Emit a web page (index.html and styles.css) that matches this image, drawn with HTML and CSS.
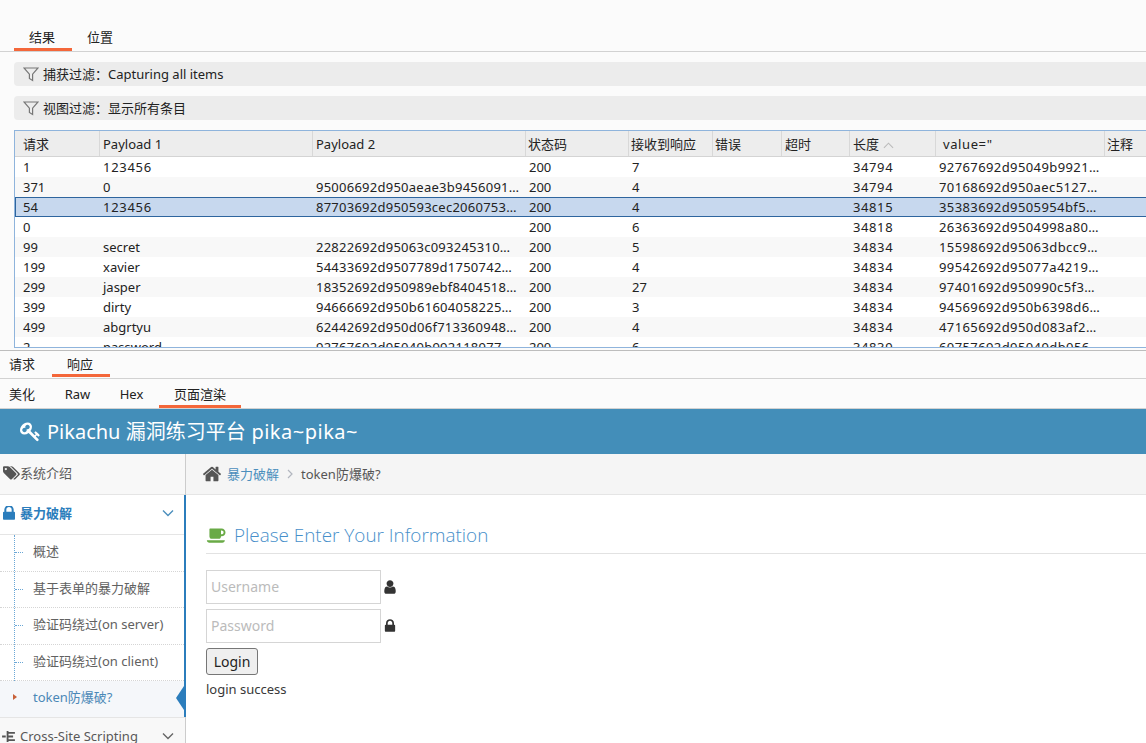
FILE: index.html
```html
<!DOCTYPE html>
<html lang="zh-CN">
<head>
<meta charset="utf-8">
<title>Intruder results</title>
<link rel="stylesheet" href="styles.css">
</head>
<body>
<div class="tabs top-tabs">
  <span class="tab tab-results active">结果</span>
  <span class="tab tab-pos">位置</span>
</div>
<div class="filter filter-first"><svg class="funnel" viewBox="0 0 16 16"><path d="M1 2h14L9.6 8.2V14.5L6.4 12.5V8.2z"/></svg><span>捕获过滤：Capturing all items</span></div>
<div class="filter filter-second"><svg class="funnel" viewBox="0 0 16 16"><path d="M1 2h14L9.6 8.2V14.5L6.4 12.5V8.2z"/></svg><span>视图过滤：显示所有条目</span></div>

<div class="table">
  <div class="row head">
    <span class="c c1">请求</span><span class="c c2">Payload 1</span><span class="c c3">Payload 2</span><span class="c c4">状态码</span><span class="c c5">接收到响应</span><span class="c c6">错误</span><span class="c c7">超时</span><span class="c c8">长度<svg class="sort" viewBox="0 0 12 7"><path d="M1 6l5-5 5 5"/></svg></span><span class="c c9">&nbsp;value="</span><span class="c c10">注释</span>
  </div>
  <div class="row"><span class="c c1">1</span><span class="c c2 digits">123456</span><span class="c c3"></span><span class="c c4">200</span><span class="c c5">7</span><span class="c c6"></span><span class="c c7"></span><span class="c c8">34794</span><span class="c c9">92767692d95049b9921…</span><span class="c c10"></span></div>
  <div class="row alt"><span class="c c1">371</span><span class="c c2">0</span><span class="c c3">95006692d950aeae3b9456091…</span><span class="c c4">200</span><span class="c c5">4</span><span class="c c6"></span><span class="c c7"></span><span class="c c8">34794</span><span class="c c9">70168692d950aec5127…</span><span class="c c10"></span></div>
  <div class="row selected"><span class="c c1">54</span><span class="c c2 digits">123456</span><span class="c c3">87703692d950593cec2060753…</span><span class="c c4">200</span><span class="c c5">4</span><span class="c c6"></span><span class="c c7"></span><span class="c c8">34815</span><span class="c c9">35383692d9505954bf5…</span><span class="c c10"></span></div>
  <div class="row"><span class="c c1">0</span><span class="c c2"></span><span class="c c3"></span><span class="c c4">200</span><span class="c c5">6</span><span class="c c6"></span><span class="c c7"></span><span class="c c8">34818</span><span class="c c9">26363692d9504998a80…</span><span class="c c10"></span></div>
  <div class="row alt"><span class="c c1">99</span><span class="c c2">secret</span><span class="c c3">22822692d95063c093245310…</span><span class="c c4">200</span><span class="c c5">5</span><span class="c c6"></span><span class="c c7"></span><span class="c c8">34834</span><span class="c c9">15598692d95063dbcc9…</span><span class="c c10"></span></div>
  <div class="row"><span class="c c1">199</span><span class="c c2">xavier</span><span class="c c3">54433692d9507789d1750742…</span><span class="c c4">200</span><span class="c c5">4</span><span class="c c6"></span><span class="c c7"></span><span class="c c8">34834</span><span class="c c9">99542692d95077a4219…</span><span class="c c10"></span></div>
  <div class="row alt"><span class="c c1">299</span><span class="c c2">jasper</span><span class="c c3">18352692d950989ebf8404518…</span><span class="c c4">200</span><span class="c c5">27</span><span class="c c6"></span><span class="c c7"></span><span class="c c8">34834</span><span class="c c9">97401692d950990c5f3…</span><span class="c c10"></span></div>
  <div class="row"><span class="c c1">399</span><span class="c c2">dirty</span><span class="c c3">94666692d950b61604058225…</span><span class="c c4">200</span><span class="c c5">3</span><span class="c c6"></span><span class="c c7"></span><span class="c c8">34834</span><span class="c c9">94569692d950b6398d6…</span><span class="c c10"></span></div>
  <div class="row alt"><span class="c c1">499</span><span class="c c2">abgrtyu</span><span class="c c3">62442692d950d06f713360948…</span><span class="c c4">200</span><span class="c c5">4</span><span class="c c6"></span><span class="c c7"></span><span class="c c8">34834</span><span class="c c9">47165692d950d083af2…</span><span class="c c10"></span></div>
  <div class="row"><span class="c c1">2</span><span class="c c2">password</span><span class="c c3">92767692d95049b992118977…</span><span class="c c4">200</span><span class="c c5">6</span><span class="c c6"></span><span class="c c7"></span><span class="c c8">34839</span><span class="c c9">60757692d95049db056…</span><span class="c c10"></span></div>
</div>

<div class="tabs req-tabs">
  <span class="tab tab-req">请求</span>
  <span class="tab tab-resp active">响应</span>
</div>
<div class="tabs view-tabs">
  <span class="tab tab-a">美化</span>
  <span class="tab tab-b">Raw</span>
  <span class="tab tab-c">Hex</span>
  <span class="tab tab-d active">页面渲染</span>
</div>

<header class="banner">
  <svg class="key" viewBox="0 0 1792 1792"><path d="M832 512q0-80-56-136t-136-56-136 56-56 136q0 42 19 83-41-19-83-19-80 0-136 56t-56 136 56 136 136 56 136-56 56-136q0-42-19-83 41 19 83 19 80 0 136-56t56-136zm851 704q0 17-49 66t-66 49q-9 0-28.5-16t-36.5-33-38.5-40-24.5-26l-96 96 220 220q28 28 28 68 0 42-39 81t-81 39q-40 0-68-28l-671-671q-176 131-365 131-163 0-265.5-102.5t-102.5-265.5q0-160 95-313t248-248 313-95q163 0 265.5 102.5t102.5 265.5q0 189-131 365l355 355 96-96q-3-3-26-24.5t-40-38.5-33-36.5-16-28.5q0-17 49-66t66-49q13 0 23 10 6 6 46 44.5t82 79.5 86.5 86 73 78 28.5 41z"/></svg>
  <span>Pikachu 漏洞练习平台<span class="pika"> pika~pika~</span></span>
</header>

<div class="site">
  <aside class="side">
    <div class="nav-item nav-intro">
      <svg class="nav-ico" viewBox="0 0 1920 1792"><path d="M448 448q0-53-37.500-90.500t-90.500-37.500-90.500 37.500-37.500 90.500 37.500 90.500 90.500 37.500 90.500-37.500 37.500-90.500zm1067 576q0 53-37 90l-491 492q-39 37-91 37-53 0-90-37l-715-716q-38-37-64.500-101t-26.500-117v-416q0-52 38-90t90-38h416q53 0 117 26.500t102 64.500l715 714q37 39 37 91zm384 0q0 53-37 90l-491 492q-39 37-91 37-36 0-59-14t-53-45l470-470q37-37 37-90 0-52-37-91l-715-714q-38-38-102-64.500t-117-26.500h224q53 0 117 26.500t102 64.500l715 714q37 39 37 91z"/></svg>
      <span>系统介绍</span>
    </div>
    <div class="open-group">
      <div class="nav-item nav-open">
        <svg class="nav-ico lock" viewBox="320 256 1152 1280"><path d="M640 768h512v-192q0-106-75-181t-181-75-181 75-75 181v192zm832 96v576q0 40-28 68t-68 28h-960q-40 0-68-28t-28-68v-576q0-40 28-68t68-28h32v-192q0-184 132-316t316-132 316 132 132 316v192h32q40 0 68 28t28 68z"/></svg>
        <span class="grow">暴力破解</span>
        <svg class="chev" viewBox="0 0 12 8"><path d="M1 1.500l5 5 5-5"/></svg>
      </div>
      <ul class="sub">
        <li class="sub-item">概述</li>
        <li class="sub-item">基于表单的暴力破解</li>
        <li class="sub-item">验证码绕过(on server)</li>
        <li class="sub-item">验证码绕过(on client)</li>
        <li class="sub-item current">token防爆破?</li>
      </ul>
    </div>
    <div class="nav-item nav-xss">
      <svg class="nav-ico tree" viewBox="0 0 14 12"><path d="M0 5h4v2H0zM5 0h2v12H5zM7 1h7v2H7zM7 5h5v2H7zM7 9h7v2H7z"/></svg>
      <span class="grow">Cross-Site Scripting</span>
      <svg class="chev" viewBox="0 0 12 8"><path d="M1 1.500l5 5 5-5"/></svg>
    </div>
  </aside>
  <main class="main">
    <div class="crumbs">
      <svg class="home" viewBox="0 0 1792 1792"><path d="M1472 992v480q0 26-19 45t-45 19h-384v-384h-256v384h-384q-26 0-45-19t-19-45v-480q0-1 .5-3t.5-3l575-474 575 474q1 2 1 6zm223-69l-62 74q-8 9-21 11h-3q-13 0-21-7l-692-577-692 577q-12 8-24 7-13-2-21-11l-62-74q-8-10-7-23.500t11-21.500l719-599q32-26 76-26t76 26l244 204v-195q0-14 9-23t23-9h192q14 0 23 9t9 23v408l219 182q10 8 11 21.500t-7 23.500z"/></svg>
      <span class="crumb-link">暴力破解</span>
      <svg class="crumb-sep" viewBox="0 0 6 10"><path d="M1 1l4 4-4 4"/></svg>
      <span class="crumb-now">token防爆破?</span>
    </div>
    <div class="content">
      <h4 class="title">
        <svg class="cup" viewBox="0 0 1920 1792"><path d="M1664 640q0-80-56-136t-136-56h-64v384h64q80 0 136-56t56-136zm-1664 768h1792q0 106-75 181t-181 75h-1280q-106 0-181-75t-75-181zm1856-768q0 159-112.500 271.500t-271.500 112.500h-64v32q0 92-66 158t-158 66h-704q-92 0-158-66t-66-158v-736q0-26 19-45t45-19h1152q159 0 271.500 112.500t112.500 271.500z"/></svg>
        <span>Please Enter Your Information</span>
      </h4>
      <div class="field">
        <input class="input" type="text" placeholder="Username">
        <svg class="f-ico" viewBox="0 0 1792 1792"><path d="M1536 1399q0 109-62.500 187t-150.500 78h-854q-88 0-150.500-78t-62.500-187q0-85 8.500-160.500t31.500-152 58.500-131 94-89 134.500-34.500q131 128 313 128t313-128q76 0 134.500 34.500t94 89 58.500 131 31.500 152 8.500 160.500zm-256-887q0 159-112.500 271.500t-271.500 112.500-271.500-112.500-112.500-271.500 112.500-271.500 271.500-112.500 271.500 112.500 112.500 271.500z"/></svg>
      </div>
      <div class="field">
        <input class="input" type="password" placeholder="Password">
        <svg class="f-ico" viewBox="0 0 1792 1792"><path d="M640 768h512v-192q0-106-75-181t-181-75-181 75-75 181v192zm832 96v576q0 40-28 68t-68 28h-960q-40 0-68-28t-28-68v-576q0-40 28-68t68-28h32v-192q0-184 132-316t316-132 316 132 132 316v192h32q40 0 68 28t28 68z"/></svg>
      </div>
      <button class="login" type="button">Login</button>
      <p class="msg">login success</p>
    </div>
  </main>
</div>
</body>
</html>
```
FILE: styles.css
```css
* { box-sizing: border-box; }
html, body { height: 743px; overflow: hidden; }
body {
  margin: 0;
  background: #fbfbfb;
  color: #222;
  font: 13px/20px "Noto Sans", "Noto Sans CJK SC", sans-serif;
}

.tabs { display: flex; border-bottom: 1px solid #d2d2d2; }
.tab { display: block; text-align: center; height: 100%; border-bottom: 3px solid transparent; }
.tab.active { border-bottom-color: #f4673a; }

.top-tabs { height: 52px; padding: 27px 0 0 14px; }
.tab-results { width: 58px; height: 24px; padding-right: 2px; }
.tab-pos { width: 58px; height: 24px; padding-right: 2px; }

.filter {
  display: flex;
  align-items: center;
  gap: 4px;
  height: 24px;
  margin-left: 14px;
  padding-left: 9px;
  background: #ececec;
  border-radius: 4px 0 0 4px;
}
.filter-first { margin-top: 10px; }
.filter-second { margin-top: 10px; }
.funnel { width: 16px; height: 16px; fill: none; stroke: #777; stroke-width: 1.2; }

.table {
  height: 218px;
  margin: 10px 0 0 14px;
  overflow: hidden;
  background: #fff;
  border: 1px solid #8fb4dc;
  border-right: 0;
}
.row { display: flex; height: 20px; line-height: 20px; white-space: nowrap; }
.row.alt { background: #f8f8f8; }
.row.selected {
  margin-right: -4px;
  background: #c7d8ee;
  outline: 1px solid #2e659e;
  outline-offset: -1px;
}
.row.head { height: 26px; line-height: 26px; background: #ededed; border-bottom: 1px solid #d4d4d4; }
.head .c { border-right: 1px solid #d8d8d8; }
.head .c10 { border-right: 0; }
.c { display: block; flex: none; padding-left: 3px; overflow: hidden; }
.c1 { width: 85px; padding-left: 8px; }
.c2 { width: 213px; }
.c3 { width: 213px; }
.c4 { width: 103px; }
.c5 { width: 84px; }
.c6 { width: 69px; }
.c7 { width: 68px; }
.c8 { width: 86px; }
.c9 { width: 169px; }
.c10 { width: 42px; }
.head .c4, .head .c5, .head .c6, .head .c10 { padding-left: 2px; }
.head .c9 { letter-spacing: 0.6px; }
.digits { letter-spacing: 0.7px; }
.row:not(.head) .c3 { letter-spacing: 0.25px; }
.row:not(.head) .c8 { letter-spacing: 0.6px; }
.row:not(.head) .c9 { letter-spacing: 0.4px; }
.sort { width: 11px; height: 7px; margin-left: 4px; fill: none; stroke: #bbb; stroke-width: 1.2; }

.req-tabs { height: 29px; margin-top: 2px; border-top: 1px solid #bdbdbd; }
.tab-req { width: 45px; height: 28px; padding: 3px 0 0 9px; text-align: left; }
.tab-resp { width: 58px; height: 26px; padding: 3px 2px 0 0; margin-left: 7px; }

.view-tabs { height: 30px; background: #fbfbfb; }
.view-tabs .tab { height: 29px; padding-top: 5px; }
.tab-a { width: 49px; padding-left: 9px; text-align: left !important; }
.tab-b { width: 57px; }
.tab-c { width: 53px; padding-right: 2px; }
.tab-d { width: 82px; }

.banner {
  display: flex;
  align-items: center;
  gap: 6px;
  height: 45px;
  padding-left: 20px;
  background: #438eb9;
  color: #fff;
  font-size: 20px;
}
.pika { letter-spacing: 0.5px; }
.key { width: 21px; height: 21px; fill: #fff; }

.site { display: flex; height: 289px; background: #fff; }
.side { flex: none; width: 186px; background: #f2f2f2; border-right: 1px solid #cccccc; }
.nav-item {
  display: flex;
  align-items: center;
  padding-left: 3px;
  padding-right: 11px;
  color: #585858;
  background: #f8f8f8;
}
.nav-intro { height: 41px; border-bottom: 1px solid #e5e5e5; padding-bottom: 3px; }
.open-group { margin-right: -1px; border-right: 2px solid #2b7dbc; background: #fff; }
.nav-open { height: 40px; padding-bottom: 3px; padding-right: 10px; color: #2b7dbc; font-weight: 700; background: #fff; border-bottom: 1px solid #e5e5e5; }
.nav-xss { height: 40px; padding-bottom: 3px; border-top: 1px solid #e5e5e5; }
.nav-ico { flex: none; width: 17px; height: 16px; fill: #555; }
.nav-ico.lock { width: 12px; height: 14px; margin-right: 5px; fill: #2b7dbc; }
.nav-ico.tree { width: 13px; height: 11px; margin: 0 5px 0 -1px; }
.grow { flex: 1; }
.chev { flex: none; width: 12px; height: 8px; fill: none; stroke: #4c8fbd; stroke-width: 1.4; }
.nav-xss .chev { stroke: #666; }

.sub {
  position: relative;
  margin: 0;
  padding: 0;
  list-style: none;
  background: #fff;
}
.sub::before {
  content: "";
  position: absolute;
  left: 14px;
  top: 0;
  bottom: 0;
  border-left: 1px dotted #6aa7d6;
}
.sub-item {
  position: relative;
  height: 37px;
  padding: 6px 0 0 33px;
  color: #616161;
  border-bottom: 1px dotted #d5d5d5;
}
.sub-item:nth-child(even) { height: 36px; }
.sub-item::before {
  content: "";
  position: absolute;
  left: 15px;
  top: 17px;
  width: 8px;
  border-top: 1px dotted #6aa7d6;
}
.sub-item.current {
  height: 36px;
  color: #4b88b7;
  background: #f5f7fa;
  border-bottom: 0;
}
.sub-item.current::before {
  left: 13px;
  top: 13px;
  width: 0;
  border-top: 3px solid transparent;
  border-bottom: 3px solid transparent;
  border-left: 4px solid #c86139;
}
.sub-item.current::after {
  content: "";
  position: absolute;
  right: 0;
  top: 5px;
  border-top: 12px solid transparent;
  border-bottom: 12px solid transparent;
  border-right: 8px solid #2b7dbc;
}

.main { flex: 1; min-width: 0; }
.crumbs {
  display: flex;
  align-items: center;
  height: 41px;
  padding-left: 16px;
  background: #f5f5f5;
  border-bottom: 1px solid #e5e5e5;
  color: #555;
}
.home { width: 20px; height: 20px; fill: #555; margin-right: 5px; }
.crumb-link { color: #4c8fbd; }
.crumb-sep { width: 6px; height: 10px; margin: 0 8px; fill: none; stroke: #b2b6bf; stroke-width: 1.2; }

.content { padding: 0 0 0 20px; color: #393939; }
.title {
  display: flex;
  align-items: center;
  gap: 7px;
  height: 59px;
  margin: 0 0 16px;
  padding-top: 22px;
  border-bottom: 1px solid #e2e2e2;
  color: #478fca;
  font: 300 18.9px/26px "Open Sans", sans-serif;
}
.cup { width: 21px; height: 18px; fill: #69aa46; }
.field { display: flex; align-items: center; gap: 1px; margin-bottom: 5px; }
.input {
  width: 175px;
  height: 34px;
  padding: 0 4px 2px;
  border: 1px solid #d5d5d5;
  background: #fff;
  font: 14px "Noto Sans", sans-serif;
}
.input::placeholder { color: #bbb; }
.f-ico { width: 16px; height: 16px; fill: #333; }
.login {
  display: block;
  width: 52px;
  height: 27px;
  padding: 0;
  background: #efefef;
  border: 1px solid #767676;
  border-radius: 3px;
  color: #222;
  font: 14px "Noto Sans", sans-serif;
}
.msg { margin: 4px 0 0; color: #393939; }
```
